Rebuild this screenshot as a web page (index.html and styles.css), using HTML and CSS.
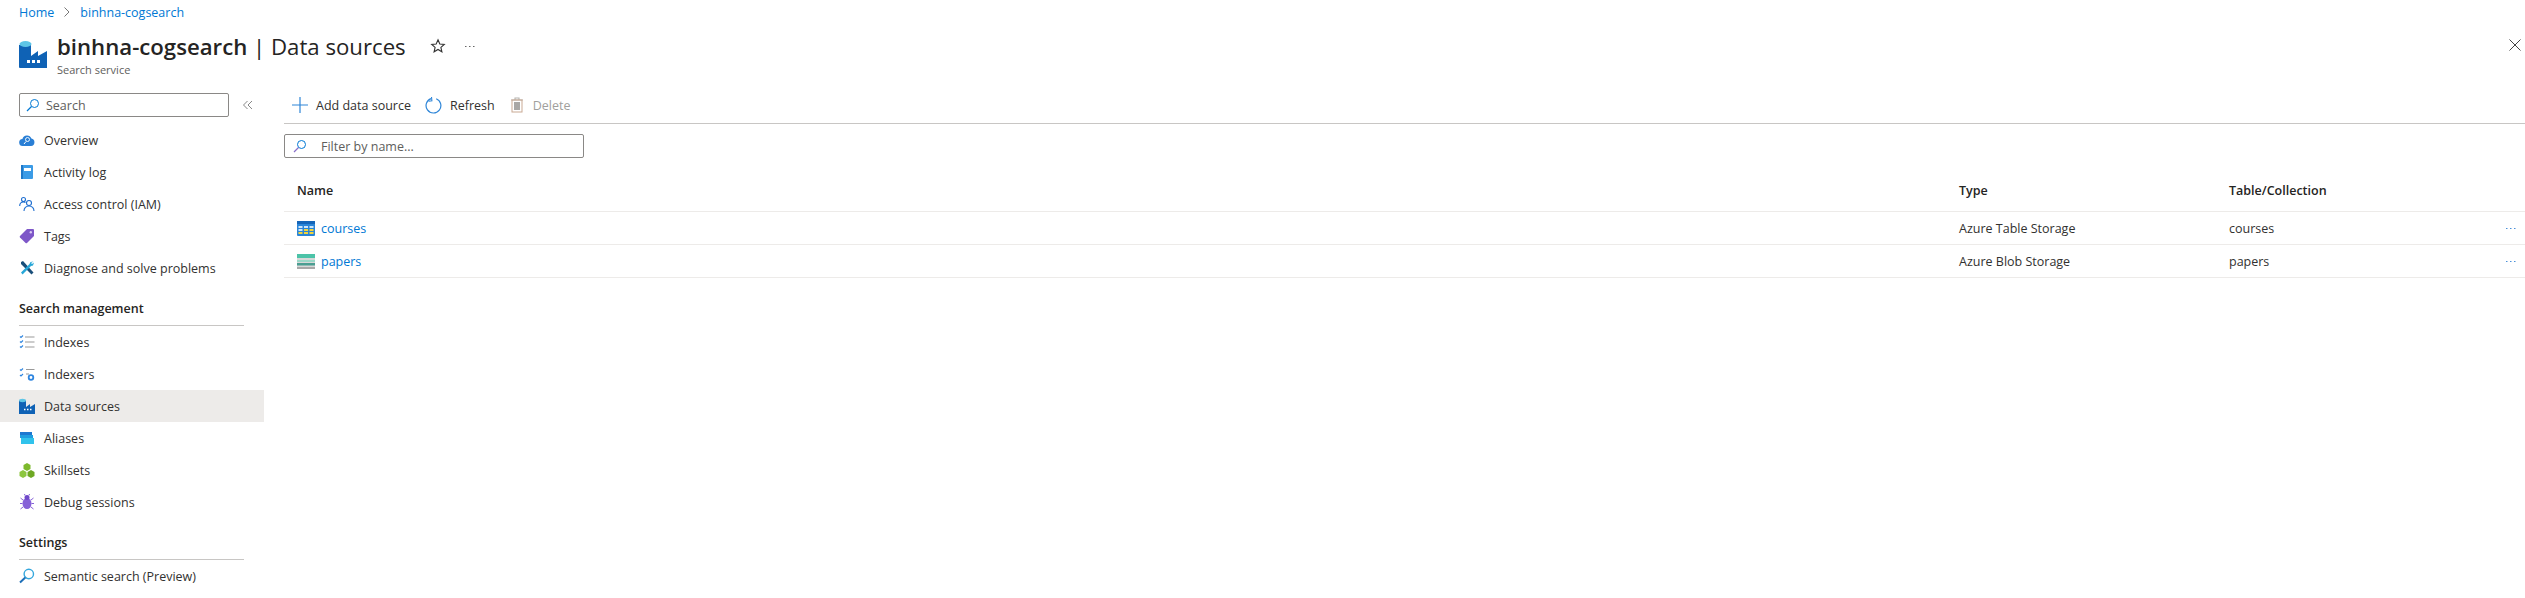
FILE: index.html
```html
<!DOCTYPE html>
<html lang="en">
<head>
  <meta charset="UTF-8" />
  <title>binhna-cogsearch | Data sources</title>
  <link rel="stylesheet" href="styles.css">
</head>
<body>
  <div class="breadcrumb">
    <a href="#">Home</a>
    <svg class="crumb-sep" width="8" height="12" viewBox="0 0 8 12"><path d="M1.500 1.500L6 6l-4.500 4.500" fill="none" stroke="#777" stroke-width="1"/></svg>
    <a href="#">binhna-cogsearch</a>
  </div>

  <div class="page-header">
    <svg class="page-icon" width="28" height="28" viewBox="0 0 28 28">
      <path d="M0 5h12v11l7-5v5l9-5v17H1a1 1 0 0 1-1-1z" fill="#0f62b5"/>
      <ellipse cx="6.500" cy="4" rx="6" ry="3" fill="#5ec5e6"/>
      <rect x="8" y="20" width="3" height="3" fill="#fff"/>
      <rect x="13" y="20" width="3" height="3" fill="#fff"/>
      <rect x="18" y="20" width="3" height="3" fill="#fff"/>
    </svg>
    <div class="page-titles">
      <div class="title-row">
        <h1><b>binhna-cogsearch</b> | Data sources</h1>
        <svg class="star" width="16" height="16" viewBox="0 0 16 16"><path d="M8 1.800l1.800 4.200 4.500.4-3.400 3 1 4.400L8 11.500l-3.900 2.300 1-4.400-3.400-3 4.500-.4z" fill="none" stroke="#333" stroke-width="1.100"/></svg>
        <svg class="more-head" width="10" height="3" viewBox="0 0 10 3"><path d="M0 1h1.500v1H0zM4 1h1.500v1H4zM8 1h1.500v1H8z" fill="#666"/></svg>
      </div>
      <div class="subtitle">Search service</div>
    </div>
    <svg class="close" width="14" height="14" viewBox="0 0 14 14"><path d="M1.500 1.500l11 11M12.500 1.500l-11 11" stroke="#444" stroke-width="1"/></svg>
  </div>

  <div class="main">
    <nav class="sidebar">
      <div class="side-search-row">
        <div class="side-search">
          <svg width="14" height="14" viewBox="0 0 14 14"><circle cx="8.500" cy="5.500" r="4" fill="none" stroke="#0078d4" stroke-width="1"/><path d="M5.500 8.500L1 13" stroke="#0078d4" stroke-width="1.200"/></svg>
          <span>Search</span>
        </div>
        <svg class="collapse" width="12" height="12" viewBox="0 0 12 12"><path d="M5.500 2L1.500 6l4 4M10 2L6 6l4 4" fill="none" stroke="#888" stroke-width="1"/></svg>
      </div>

      <a class="nav-item" href="#">
        <svg width="16" height="16" viewBox="0 0 16 16"><path d="M4 14a3.500 3.500 0 0 1-.6-7A4.800 4.800 0 0 1 12.400 6.500 3.800 3.800 0 0 1 12 14z" fill="#2a7fd5"/><circle cx="8.500" cy="7.500" r="2" fill="none" stroke="#fff" stroke-width=".9"/><path d="M7 9.500l-2 2.500" stroke="#fff"/></svg>
        Overview
      </a>
      <a class="nav-item" href="#">
        <svg width="16" height="16" viewBox="0 0 16 16"><rect x="2" y="1" width="12" height="14" rx="1" fill="#3b9be6"/><rect x="2" y="1" width="2" height="14" fill="#1f78c8"/><rect x="5" y="4" width="7" height="3" fill="#fff"/></svg>
        Activity log
      </a>
      <a class="nav-item" href="#">
        <svg width="16" height="16" viewBox="0 0 16 16" fill="none" stroke="#1f6fd0" stroke-width="1.100"><circle cx="4.500" cy="3.500" r="2"/><path d="M.7 10c0-2.500 1.500-4 3.800-4 .8 0 1.500.2 2 .5"/><circle cx="10" cy="7" r="2.500"/><path d="M5 15c0-3 2-5 5-5s5 2 5 5"/></svg>
        Access control (IAM)
      </a>
      <a class="nav-item" href="#">
        <svg width="16" height="16" viewBox="0 0 16 16"><path d="M1 8l7-7h6a1 1 0 0 1 1 1v6l-7 7a1 1 0 0 1-1.400 0L1 9.400A1 1 0 0 1 1 8z" fill="#7e57c8"/><circle cx="11.800" cy="4.200" r="1.200" fill="#d9c9f2"/></svg>
        Tags
      </a>
      <a class="nav-item" href="#">
        <svg width="16" height="16" viewBox="0 0 16 16"><path d="M2 2l2-1 10.500 11.500-2 2L2 4z" fill="#1a4f7a"/><path d="M14.500 1.500l-3 .5-1 2L2 12.500l1.500 2L12 6l2-.5 1-3-2 1.500-1-1z" fill="#27a7d8"/></svg>
        Diagnose and solve problems
      </a>

      <div class="nav-group">
        <div class="group-title">Search management</div>
        <a class="nav-item" href="#">
          <svg width="16" height="16" viewBox="0 0 16 16"><path d="M1 2.500l1 1 2-2M1 7.500l1 1 2-2M1 12.500l1 1 2-2" fill="none" stroke="#2f86e0" stroke-width="1.100"/><path d="M6 3h9.500M6 8h9.500M6 13h9.500" stroke="#999" stroke-width="1.200"/></svg>
          Indexes
        </a>
        <a class="nav-item" href="#">
          <svg width="16" height="16" viewBox="0 0 16 16"><path d="M1 3.500l1 1 2-2M1 9l1 1 2-2" fill="none" stroke="#2f86e0" stroke-width="1.100"/><path d="M7 3.500h8.500M7 8h3" stroke="#999" stroke-width="1.200"/><circle cx="12" cy="11.500" r="2.300" fill="none" stroke="#2f86e0" stroke-width="1.800"/></svg>
          Indexers
        </a>
        <a class="nav-item active" href="#">
          <svg width="16" height="16" viewBox="0 0 16 16"><path d="M0 3h7v6l4-3v3l5-3v10H0z" fill="#0f62b5"/><ellipse cx="3.500" cy="2.500" rx="3.500" ry="1.700" fill="#5ec5e6"/><path d="M5 11.500h1.500M8 11.500h1.500M11 11.500h1.500" stroke="#fff" stroke-width="1.500"/></svg>
          Data sources
        </a>
        <a class="nav-item" href="#">
          <svg width="16" height="16" viewBox="0 0 16 16"><path d="M1 2h12v3H1z" fill="#1d78d0"/><path d="M1 5h13v3H1z" fill="#1f9de0"/><path d="M2 8h13v6H2z" fill="#31c3ec"/></svg>
          Aliases
        </a>
        <a class="nav-item" href="#">
          <svg width="16" height="16" viewBox="0 0 16 16"><path d="M8 1l3.500 2v4L8 9 4.500 7V3z" fill="#7db92c"/><path d="M4 8l3.500 2v4L4 16 .5 14v-4z" fill="#8cc63f"/><path d="M12 8l3.500 2v4L12 16l-3.500-2v-4z" fill="#6ea823"/></svg>
          Skillsets
        </a>
        <a class="nav-item" href="#">
          <svg width="16" height="16" viewBox="0 0 16 16"><ellipse cx="8" cy="9.500" rx="4.500" ry="5.500" fill="#8661d8"/><circle cx="8" cy="3.500" r="2.500" fill="#6f48c9"/><path d="M4 6L1.500 4M12 6l2.500-2M3.500 9.500H1M12.500 9.500H15M4 13l-2.500 2M12 13l2.500 2M6 1.500L5.500 0M10 1.500l.5-1.500" stroke="#8661d8" stroke-width="1"/></svg>
          Debug sessions
        </a>
      </div>

      <div class="nav-group">
        <div class="group-title">Settings</div>
        <a class="nav-item" href="#">
          <svg width="16" height="16" viewBox="0 0 16 16"><circle cx="9.800" cy="6" r="4.700" fill="#fff" stroke="#35a7dd" stroke-width="1.400"/><path d="M6.300 9.500L1 14.500" stroke="#1d6fb8" stroke-width="2"/></svg>
          Semantic search (Preview)
        </a>
      </div>
    </nav>

    <div class="content">
      <div class="toolbar">
        <button class="tool-btn">
          <svg width="16" height="16" viewBox="0 0 16 16"><path d="M8 0v16M0 8h16" stroke="#2f86d8" stroke-width="1.200"/></svg>
          Add data source
        </button>
        <button class="tool-btn">
          <svg width="17" height="17" viewBox="0 0 17 17"><path d="M6 1.600A7.400 7.400 0 1 0 11.200 1.700" fill="none" stroke="#2f86d8" stroke-width="1.200"/><path d="M6.500 0l.4 3.800-3.400.4" fill="none" stroke="#2f86d8" stroke-width="1.100"/></svg>
          Refresh
        </button>
        <button class="tool-btn disabled">
          <svg width="14" height="16" viewBox="0 0 14 16"><path d="M1 3h12M5 3V1h4v2" fill="none" stroke="#b5b3b0" stroke-width="1.100"/><rect x="2" y="3" width="10" height="12" fill="none" stroke="#c9a993" stroke-width="1"/><rect x="4" y="5" width="6" height="8" fill="#a9a7a5"/></svg>
          Delete
        </button>
      </div>

      <div class="filter">
        <svg width="14" height="14" viewBox="0 0 14 14"><circle cx="8.500" cy="5.500" r="4" fill="none" stroke="#0078d4" stroke-width="1"/><path d="M5.500 8.500L1 13" stroke="#8a6fc9" stroke-width="1.200"/></svg>
        <span>Filter by name...</span>
      </div>

      <div class="table">
        <div class="row head">
          <div>Name</div>
          <div>Type</div>
          <div>Table/Collection</div>
          <div></div>
        </div>
        <div class="row">
          <div class="name-cell">
            <svg width="18" height="15" viewBox="0 0 18 15"><rect width="18" height="15" rx="1" fill="#2a85d8"/><rect y="0" width="18" height="3" fill="#1565b8"/><path d="M1.500 5h4v2h-4zM7 5h4v2H7zM12.500 5h4v2h-4z" fill="#cfe6fa"/><path d="M1.500 8h4v2h-4z" fill="#cfe6fa"/><path d="M7 8h4v2H7zM12.500 8h4v2h-4zM7 11h4v2H7zM12.500 11h4v2h-4z" fill="#f2d53c"/><path d="M1.500 11h4v2h-4z" fill="#f2d53c"/></svg>
            <a href="#">courses</a>
          </div>
          <div>Azure Table Storage</div>
          <div>courses</div>
          <svg width="10" height="3" viewBox="0 0 10 3"><path d="M0 1h1.500v1H0zM4 1h1.500v1H4zM8 1h1.500v1H8z" fill="#4a90d9"/></svg>
        </div>
        <div class="row">
          <div class="name-cell">
            <svg width="18" height="15" viewBox="0 0 18 15"><rect width="18" height="15" fill="#d8d8d8"/><rect width="18" height="4" fill="#4cc3a8"/><rect y="6" width="18" height="2" fill="#9ad8c8"/><rect y="9" width="18" height="2.500" fill="#4a9e92"/><rect y="13" width="18" height="2" fill="#a8a8a8"/></svg>
            <a href="#">papers</a>
          </div>
          <div>Azure Blob Storage</div>
          <div>papers</div>
          <svg width="10" height="3" viewBox="0 0 10 3"><path d="M0 1h1.500v1H0zM4 1h1.500v1H4zM8 1h1.500v1H8z" fill="#4a90d9"/></svg>
        </div>
      </div>
    </div>
  </div>
</body>
</html>
```

FILE: styles.css
```css
html, body {
  margin: 0;
  height: 100%;
  overflow: hidden;
}
body {
  font-family: "Open Sans", "Noto Sans", sans-serif;
  font-size: 12.5px;
  color: #323130;
  background-color: #fff;
}
a {
  color: inherit;
  text-decoration: none;
}
svg {
  flex-shrink: 0;
}
.breadcrumb {
  display: flex;
  align-items: center;
  gap: 9px;
  height: 24px;
  padding-left: 19px;
  color: #0078d4;
}
.page-header {
  display: flex;
  align-items: flex-start;
  height: 69px;
  padding: 16px 3px 0 19px;
  box-sizing: border-box;
}
.page-titles {
  margin-left: 10px;
  flex: 1;
}
.title-row {
  display: flex;
  align-items: center;
  height: 26px;
  margin-top: -7px;
}
h1 {
  margin: 0;
  font-size: 22.2px;
  font-weight: 400;
  color: #252423;
  white-space: nowrap;
}
h1 b {
  font-weight: 600;
}
.star {
  margin-left: 24px;
}
.more-head {
  margin-left: 19px;
}
.subtitle {
  margin-top: 3px;
  font-size: 11px;
  color: #605e5c;
}
.close {
  margin-top: -2px;
}
.main {
  display: flex;
}
.sidebar {
  width: 264px;
  flex-shrink: 0;
}
.side-search-row {
  display: flex;
  align-items: center;
  padding-left: 19px;
  margin-bottom: 7px;
}
.side-search {
  display: flex;
  align-items: center;
  gap: 6px;
  width: 210px;
  height: 24px;
  box-sizing: border-box;
  padding-left: 6px;
  border: 1px solid #8a8886;
  border-radius: 2px;
  color: #605e5c;
}
.collapse {
  margin-left: 13px;
}
.nav-item {
  display: flex;
  align-items: center;
  gap: 9px;
  height: 32px;
  padding-left: 19px;
  white-space: nowrap;
}
.nav-item.active {
  background-color: #edebe9;
}
.nav-group {
  margin-top: 12px;
}
.group-title {
  margin: 0 20px 0 19px;
  height: 30px;
  line-height: 26px;
  box-sizing: border-box;
  font-weight: 600;
  color: #252423;
  border-bottom: 1px solid #c8c6c4;
}
.content {
  flex: 1;
  padding: 0 0 0 20px;
  margin-top: -6px;
}
.toolbar {
  display: flex;
  align-items: center;
  gap: 14px;
  height: 36px;
  padding-left: 8px;
  border-bottom: 1px solid #c8c6c4;
}
.tool-btn {
  display: flex;
  align-items: center;
  gap: 8px;
  padding: 0;
  border: none;
  background: none;
  font: inherit;
  color: #323130;
}
.tool-btn.disabled {
  gap: 9px;
  margin-left: 1px;
  color: #a19f9d;
}
.filter {
  display: flex;
  align-items: center;
  gap: 14px;
  width: 300px;
  height: 24px;
  box-sizing: border-box;
  margin-top: 10px;
  padding-left: 8px;
  border: 1px solid #8a8886;
  border-radius: 2px;
  color: #605e5c;
}
.table {
  margin-top: 20px;
}
.row {
  display: grid;
  grid-template-columns: 1662px 270px 277px 1fr;
  align-items: center;
  height: 33px;
  padding-left: 13px;
  border-bottom: 1px solid #edebe9;
  box-sizing: border-box;
}
.row.head {
  height: 34px;
  font-weight: 600;
  color: #252423;
  padding-bottom: 8px;
}
.name-cell {
  display: flex;
  align-items: center;
  gap: 6px;
  color: #0078d4;
}
```
